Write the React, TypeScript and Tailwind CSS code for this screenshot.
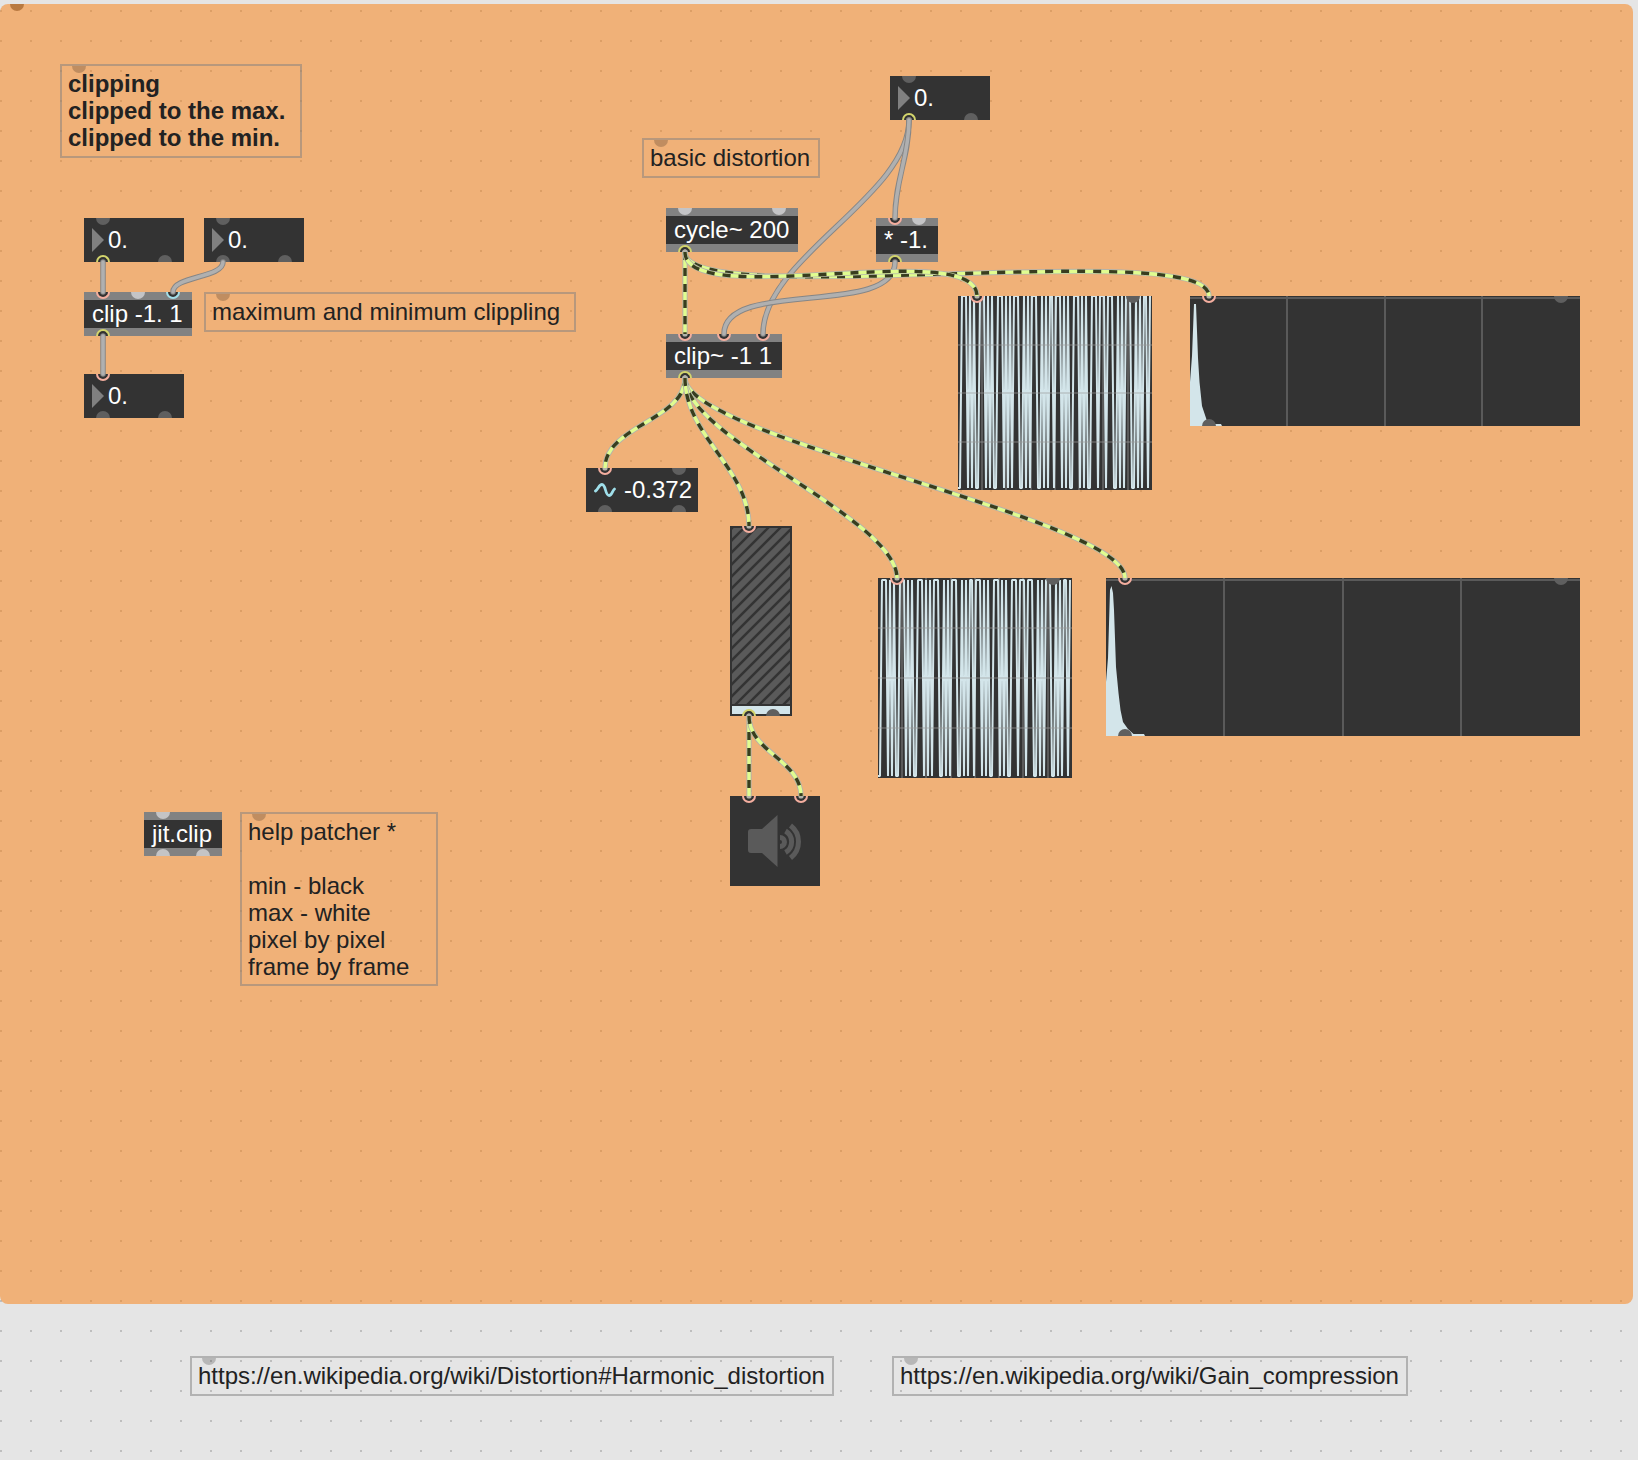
import type { ReactNode } from "react";

type PortTone = "idle" | "bright" | "comment" | "panel" | "hot" | "cold" | "out";

const toneClass: Record<PortTone, string> = {
  idle: "bg-[#5f5f5f]",
  bright: "bg-[#c4c4c6]",
  comment: "bg-black/20",
  panel: "bg-[#b97a41]",
  hot: "bg-[#333333] border-2 border-[#f4ae9f]",
  cold: "bg-[#333333] border-2 border-[#a2dfe9]",
  out: "bg-[#333333] border-2 border-[#d3d56c]",
};

type PortSpec = { x: number; tone: PortTone };

function Inlets({ ports }: { ports: PortSpec[] }) {
  return (
    <>
      {ports.map((p) => (
        <span
          key={p.x}
          aria-hidden="true"
          className={`pointer-events-none absolute top-0 z-10 h-[7px] w-[14px] -translate-x-1/2 rounded-b-full border-t-0! ${toneClass[p.tone]}`}
          style={{ left: p.x }}
        />
      ))}
    </>
  );
}

function Outlets({ ports }: { ports: PortSpec[] }) {
  return (
    <>
      {ports.map((p) => (
        <span
          key={p.x}
          aria-hidden="true"
          className={`pointer-events-none absolute bottom-0 z-10 h-[7px] w-[14px] -translate-x-1/2 rounded-t-full border-b-0! ${toneClass[p.tone]}`}
          style={{ left: p.x }}
        />
      ))}
    </>
  );
}

function Comment({ place = "", children }: { place?: string; children: ReactNode }) {
  return (
    <div className={`border-2 border-[#808080]/50 px-1.5 text-2xl leading-[27px] text-[#222222] ${place}`}>
      <Inlets ports={[{ x: 17, tone: "comment" }]} />
      {children}
    </div>
  );
}

function FloatBox({ place, label, inlet = "idle", outlet = "idle" }: { place: string; label: string; inlet?: PortTone; outlet?: PortTone }) {
  return (
    <label className={`absolute flex h-11 w-[100px] items-center bg-[#333333] pl-2 ${place}`}>
      <Inlets ports={[{ x: 19, tone: inlet }]} />
      <svg viewBox="0 0 12 24" className="h-6 w-3 shrink-0 fill-[#808080]" aria-hidden="true">
        <path d="M0 0L12 12L0 24Z" />
      </svg>
      <input aria-label={label} defaultValue="0." className="h-7 w-full min-w-0 bg-transparent pl-1 text-2xl text-white outline-none" />
      <Outlets ports={[{ x: 19, tone: outlet }, { x: 81, tone: "idle" }]} />
    </label>
  );
}

function ObjectBox({ place, text, inlets, outlets }: { place: string; text: string; inlets: PortSpec[]; outlets: PortSpec[] }) {
  return (
    <div className={`absolute border-y-8 border-[#828282] bg-[#333333] px-2 ${place}`}>
      <div className="absolute inset-x-0 -top-2 h-2">
        <Inlets ports={inlets} />
      </div>
      <p className="text-2xl leading-7 whitespace-nowrap text-white">{text}</p>
      <div className="absolute inset-x-0 -bottom-2 h-2">
        <Outlets ports={outlets} />
      </div>
    </div>
  );
}

// Start and end of every run of samples at the top rail, in thirds of a pixel.
const highRuns: [number, number][] = [
  [63, 81], [87, 93], [99, 105], [117, 135], [141, 147], [153, 159], [171, 189], [195, 201], [207, 213],
  [219, 237], [249, 255], [261, 267], [273, 291], [303, 309], [315, 321], [327, 339], [345, 363], [369, 375],
  [381, 387], [399, 417], [423, 429], [435, 441], [453, 471], [477, 495], [501, 519], [531, 537], [543, 549],
  [555, 573], [585, 591], [597, 603], [609, 621], [627, 633],
];

function wavePath(top: number, bottom: number) {
  const at = (v: number) => (v - 54) / 3;
  let d = `M0 ${bottom}`;
  let lowStart = 54;
  for (const [a, b] of highRuns) {
    d += ` L${at(lowStart) + 1} ${bottom} L${at(a) - 1} ${bottom} L${at(a) + 1} ${top} L${at(b) - 1} ${top}`;
    lowStart = b;
  }
  return d;
}

const gridColumns = [24, 48, 73, 97, 121, 145, 170];

function Scope({ place, height, top, bottom }: { place: string; height: number; top: number; bottom: number }) {
  const rows = [height / 4, height / 2, (height * 3) / 4].map(Math.round);
  return (
    <div className={`absolute w-[194px] overflow-hidden bg-[#333333] ${place}`}>
      <svg viewBox={`0 0 194 ${height}`} className="block w-full" role="img" aria-label="Signal scope">
        {gridColumns.map((x) => (
          <rect key={x} x={x - 1} y="0" width="2" height={height} fill="#5a5a5a" />
        ))}
        <path d={wavePath(top, bottom)} fill="none" stroke="#d3e5ea" strokeWidth="2" strokeLinejoin="bevel" />
        {rows.map((y) => (
          <rect key={y} x="0" y={y - 1} width="194" height="2" fill="#9a9a9a" fillOpacity="0.35" />
        ))}
      </svg>
      <Inlets ports={[{ x: 19, tone: "hot" }, { x: 175, tone: "idle" }]} />
    </div>
  );
}

function Spectrum({ place, width, height, d }: { place: string; width: number; height: number; d: string }) {
  return (
    <div className={`absolute bg-[#333333] ${place}`}>
      <svg viewBox={`0 0 ${width} ${height}`} className="block w-full" role="img" aria-label="Signal spectrum">
        <rect x="0" y="1" width={width} height="2" fill="#5a5a5a" />
        {[1, 2, 3].map((n) => (
          <rect key={n} x={Math.floor((width * n) / 4) - 1} y="0" width="2" height={height} fill="#5a5a5a" />
        ))}
        <path d={d} fill="#d3e5ea" />
      </svg>
      <Inlets ports={[{ x: 19, tone: "hot" }, { x: width - 19, tone: "idle" }]} />
      <Outlets ports={[{ x: 19, tone: "idle" }]} />
    </div>
  );
}

// x1, y1, x2, y2, pull of the control points
type Cable = [number, number, number, number, number];

const controlCables: Cable[] = [
  [103, 262, 103, 292, 0],
  [223, 262, 173, 292, 16],
  [103, 336, 103, 374, 0],
  [909, 120, 763, 334, 76],
  [909, 120, 895, 218, 38],
  [895, 262, 724, 334, 56],
];

const signalCables: Cable[] = [
  [685, 252, 685, 334, 0],
  [685, 252, 1209, 296, 60],
  [685, 252, 977, 296, 60],
  [685, 378, 605, 468, 42],
  [685, 378, 1125, 578, 60],
  [685, 378, 897, 578, 60],
  [685, 378, 749, 526, 58],
  [749, 716, 749, 796, 0],
  [749, 716, 801, 796, 36],
];

const cablePath = ([x1, y1, x2, y2, k]: Cable) => `M${x1} ${y1} C${x1} ${y1 + k} ${x2} ${y2 - k} ${x2} ${y2}`;

function Cables() {
  return (
    <svg className="pointer-events-none absolute inset-0 z-20 h-full w-full" fill="none" strokeLinecap="butt" aria-hidden="true">
      {controlCables.map((c) => (
        <g key={c.join()}>
          <path d={cablePath(c)} stroke="#868686" strokeWidth="5.5" strokeLinecap="round" />
          <path d={cablePath(c)} stroke="#b0b0b0" strokeWidth="3.6" strokeLinecap="round" />
        </g>
      ))}
      {signalCables.map((c) => (
        <g key={c.join()}>
          <path d={cablePath(c)} stroke="#b3b3ab" strokeWidth="5.2" strokeLinecap="round" />
          <path d={cablePath(c)} stroke="#e0fd90" strokeWidth="3.4" />
          <path d={cablePath(c)} stroke="#383d20" strokeWidth="3.4" strokeDasharray="8 8" />
        </g>
      ))}
    </svg>
  );
}

function GainSlider() {
  return (
    <label className="absolute top-[526px] left-[730px] h-[190px] w-[62px] bg-[#333333]">
      <svg viewBox="0 0 62 190" className="block w-full" aria-hidden="true">
        <defs>
          <clipPath id="track">
            <rect x="2" y="2" width="58" height="176" />
          </clipPath>
        </defs>
        <g clipPath="url(#track)">
          <rect x="2" y="2" width="58" height="176" fill="#5a5a5a" />
          {Array.from({ length: 21 }, (_, i) => i * 12 + 4).map((s) => (
            <path key={s} d={`M-4 ${s + 4}L66 ${s - 66}`} stroke="#333333" strokeWidth="2.4" />
          ))}
        </g>
        <rect x="2" y="180" width="58" height="8" fill="#d3e5ea" />
      </svg>
      <input type="range" aria-label="Gain" defaultValue="0" className="absolute inset-0 h-full w-full opacity-0" />
      <Inlets ports={[{ x: 19, tone: "hot" }]} />
      <Outlets ports={[{ x: 19, tone: "out" }, { x: 43, tone: "idle" }]} />
    </label>
  );
}

function AudioToggle() {
  return (
    <button type="button" aria-label="Audio on or off" className="absolute top-[796px] left-[730px] size-[90px] bg-[#333333]">
      <svg viewBox="0 0 90 90" className="block size-full" aria-hidden="true">
        <path d="M21 33H32L47.5 19V71L32 57H21Q18 57 18 54V36Q18 33 21 33Z" fill="#5a5a5a" />
        <g fill="none" stroke="#5a5a5a" strokeWidth="5">
          <path d="M50 41.5A4.5 4.5 0 0 1 50 50.5" />
          <path d="M55.5 35A12.5 12.5 0 0 1 55.5 56.5" />
          <path d="M60.5 29.5A20.5 20.5 0 0 1 60.5 62" />
        </g>
      </svg>
      <Inlets ports={[{ x: 19, tone: "hot" }, { x: 71, tone: "hot" }]} />
    </button>
  );
}

function SignalNumber() {
  return (
    <label className="absolute top-[468px] left-[586px] flex h-11 w-28 items-center bg-[#333333] pl-2">
      <Inlets ports={[{ x: 19, tone: "hot" }, { x: 93, tone: "idle" }]} />
      <svg viewBox="0 0 22 16" className="h-4 w-[22px] shrink-0" fill="none" stroke="#9fdfea" strokeWidth="2.8" strokeLinecap="round" aria-hidden="true">
        <path d="M1.5 9C4.5 7 5 2.5 8 2.5C12 2.5 11 13.5 15 13.5C18 13.5 18 9 20.5 7" />
      </svg>
      <input aria-label="Signal value" defaultValue="-0.372" className="h-7 w-full min-w-0 bg-transparent pl-2 text-2xl text-white outline-none" />
      <Outlets ports={[{ x: 19, tone: "idle" }, { x: 93, tone: "idle" }]} />
    </label>
  );
}

function PatchPanel() {
  return (
    <section className="relative mr-[5px] h-[1300px] rounded-lg bg-[#f0b178] bg-[conic-gradient(from_270deg_at_2px_2px,#dd9f66_90deg,transparent_0)] bg-[length:30px_30px] bg-[position:0_6px]">
      <Inlets ports={[{ x: 17, tone: "panel" }]} />
    </section>
  );
}

export default function App() {
  return (
    <main className="relative min-h-screen bg-[#e5e5e5] bg-[conic-gradient(from_270deg_at_2px_2px,#bebebe_90deg,transparent_0)] bg-[length:30px_30px] bg-[position:0_10px] pt-1 font-['Liberation_Sans',Arial,sans-serif]">
      <PatchPanel />

      <Comment place="absolute top-16 left-[60px] h-[94px] w-[242px] pt-1 font-bold">
        <p>clipping</p>
        <p>clipped to the max.</p>
        <p>clipped to the min.</p>
      </Comment>
      <FloatBox place="top-[218px] left-[84px]" label="Input value" outlet="out" />
      <FloatBox place="top-[218px] left-[204px]" label="Maximum value" />
      <ObjectBox
        place="top-[292px] left-[84px] w-[108px]"
        text="clip -1. 1"
        inlets={[{ x: 19, tone: "hot" }, { x: 54, tone: "bright" }, { x: 89, tone: "cold" }]}
        outlets={[{ x: 19, tone: "out" }]}
      />
      <Comment place="absolute top-[292px] left-[204px] h-10 w-[372px] pt-1">
        <p>maximum and minimum clippling</p>
      </Comment>
      <FloatBox place="top-[374px] left-[84px]" label="Clipped value" inlet="hot" />

      <FloatBox place="top-[76px] left-[890px]" label="Clip threshold" outlet="out" />
      <Comment place="absolute top-[138px] left-[642px] h-10 w-[178px] pt-1">
        <p>basic distortion</p>
      </Comment>
      <ObjectBox
        place="top-[208px] left-[666px] w-[132px]"
        text="cycle~ 200"
        inlets={[{ x: 19, tone: "bright" }, { x: 113, tone: "bright" }]}
        outlets={[{ x: 19, tone: "out" }]}
      />
      <ObjectBox
        place="top-[218px] left-[876px] w-[62px]"
        text="* -1."
        inlets={[{ x: 19, tone: "hot" }, { x: 43, tone: "bright" }]}
        outlets={[{ x: 19, tone: "out" }]}
      />
      <ObjectBox
        place="top-[334px] left-[666px] w-[116px]"
        text="clip~ -1 1"
        inlets={[{ x: 19, tone: "hot" }, { x: 58, tone: "hot" }, { x: 97, tone: "hot" }]}
        outlets={[{ x: 19, tone: "out" }]}
      />
      <SignalNumber />
      <GainSlider />
      <AudioToggle />

      <Scope place="top-[296px] left-[958px]" height={194} top={0} bottom={192} />
      <Scope place="top-[578px] left-[878px]" height={200} top={2} bottom={198} />
      <Spectrum
        place="top-[296px] left-[1190px] w-[390px]"
        width={390}
        height={130}
        d="M0 86L2 60L4 8H6L8 62L9.5 86L12 110L17 125L20 128H31L32 130H0Z"
      />
      <Spectrum
        place="top-[578px] left-[1106px] w-[474px]"
        width={474}
        height={158}
        d="M0 104L2 80L4 12L5.5 8L7 15L8 32L10 89L12.5 115L14.5 132L17 144L22 151L27.5 156H38L39 158H0Z"
      />

      <ObjectBox
        place="top-[812px] left-[144px] w-[78px]"
        text="jit.clip"
        inlets={[{ x: 19, tone: "bright" }]}
        outlets={[{ x: 19, tone: "bright" }, { x: 59, tone: "bright" }]}
      />
      <Comment place="absolute top-[812px] left-[240px] h-[174px] w-[198px] pt-1">
        <p>help patcher *</p>
        <br />
        <p>min - black</p>
        <p>max - white</p>
        <p>pixel by pixel</p>
        <p>frame by frame</p>
      </Comment>

      <Cables />

      <footer className="flex gap-[58px] pt-[52px] pl-[190px]">
        <Comment place="relative h-10 w-[644px] shrink-0 pt-1">
          <a href="https://en.wikipedia.org/wiki/Distortion#Harmonic_distortion">https://en.wikipedia.org/wiki/Distortion#Harmonic_distortion</a>
        </Comment>
        <Comment place="relative h-10 w-[516px] shrink-0 pt-1">
          <a href="https://en.wikipedia.org/wiki/Gain_compression">https://en.wikipedia.org/wiki/Gain_compression</a>
        </Comment>
      </footer>
    </main>
  );
}
